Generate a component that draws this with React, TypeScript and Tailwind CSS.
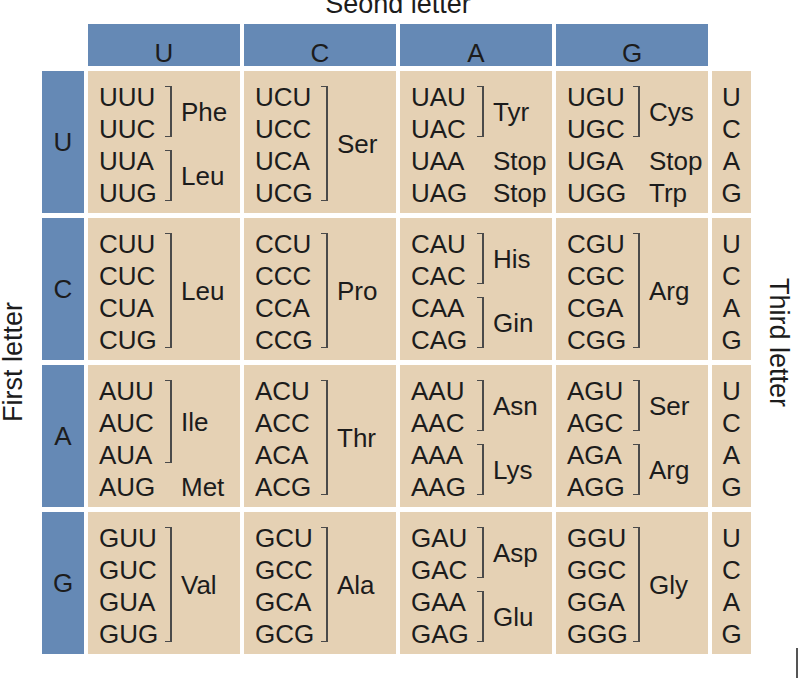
import React from "react";

type Group = { codons: string[]; aa: string; bracket: boolean };

const g = (codons: string, aa: string, bracket = true): Group => ({
  codons: codons.split(" "),
  aa,
  bracket,
});

const bases = ["U", "C", "A", "G"];

// table[first][second] -> groups of codons
const table: Group[][][] = [
  [
    [g("UUU UUC", "Phe"), g("UUA UUG", "Leu")],
    [g("UCU UCC UCA UCG", "Ser")],
    [g("UAU UAC", "Tyr"), g("UAA", "Stop", false), g("UAG", "Stop", false)],
    [g("UGU UGC", "Cys"), g("UGA", "Stop", false), g("UGG", "Trp", false)],
  ],
  [
    [g("CUU CUC CUA CUG", "Leu")],
    [g("CCU CCC CCA CCG", "Pro")],
    [g("CAU CAC", "His"), g("CAA CAG", "Gin")],
    [g("CGU CGC CGA CGG", "Arg")],
  ],
  [
    [g("AUU AUC AUA", "Ile"), g("AUG", "Met", false)],
    [g("ACU ACC ACA ACG", "Thr")],
    [g("AAU AAC", "Asn"), g("AAA AAG", "Lys")],
    [g("AGU AGC", "Ser"), g("AGA AGG", "Arg")],
  ],
  [
    [g("GUU GUC GUA GUG", "Val")],
    [g("GCU GCC GCA GCG", "Ala")],
    [g("GAU GAC", "Asp"), g("GAA GAG", "Glu")],
    [g("GGU GGC GGA GGG", "Gly")],
  ],
];

const CodonGroup = ({ group }: { group: Group }) => (
  <div className="flex">
    <div className="w-[66px]">
      {group.codons.map((c) => (
        <div key={c} className="h-[32px]">
          {c}
        </div>
      ))}
    </div>
    <div
      className={`w-[7px] mt-[5px] mb-[8px] ${
        group.bracket
          ? "border-r-2 border-t-[1.5px] border-b-[1.5px] border-[#4a4a4a]"
          : ""
      }`}
    />
    <div
      className={`flex items-center pl-[9px] ${group.bracket ? "pb-[3px]" : ""}`}
    >
      {group.aa}
    </div>
  </div>
);

export default function App() {
  return (
    <div className="relative w-[798px] h-[678px] overflow-hidden bg-white text-[#1c1c1c] font-['Liberation_Sans',Arial,sans-serif]">
      {/* Title */}
      <div className="h-[24px] ml-[88px] w-[620px] flex justify-center">
        <div className="text-[27px] leading-[27px] -mt-[9px]">Seond letter</div>
      </div>

      <div className="flex">
        {/* First letter */}
        <div className="w-[42px] pt-[47px] flex items-center">
          <div className="text-[27px] leading-[27px] [writing-mode:vertical-rl] rotate-180 whitespace-nowrap">
            First letter
          </div>
        </div>

        {/* Table */}
        <div className="grid grid-cols-[42px_152px_152px_152px_152px_39px] grid-rows-[42px_142px_142px_142px_142px] gap-x-[4px] gap-y-[5px] text-[26px] leading-[32px]">
          <div />
          {bases.map((b) => (
            <div
              key={b}
              className="bg-[#6589b5] text-center leading-[26px] pt-[16px]"
            >
              {b}
            </div>
          ))}
          <div />

          {table.map((row, i) => (
            <React.Fragment key={bases[i]}>
              <div className="bg-[#6589b5] flex items-center justify-center">
                {bases[i]}
              </div>
              {row.map((cell, j) => (
                <div key={j} className="bg-[#e5d1b4] pl-[11px] pt-[10px]">
                  {cell.map((group) => (
                    <CodonGroup key={group.codons[0]} group={group} />
                  ))}
                </div>
              ))}
              <div className="bg-[#e5d1b4] flex flex-col items-center pt-[10px]">
                {bases.map((b) => (
                  <div key={b} className="h-[32px]">
                    {b}
                  </div>
                ))}
              </div>
            </React.Fragment>
          ))}
        </div>

        {/* Third letter */}
        <div className="ml-[14px] w-[27px] pt-[8px] flex items-center">
          <div className="text-[27px] leading-[27px] [writing-mode:vertical-rl] whitespace-nowrap">
            Third letter
          </div>
        </div>
      </div>

      <div className="absolute right-0 bottom-0 w-[2px] h-[30px] bg-[#555]" />
    </div>
  );
}
